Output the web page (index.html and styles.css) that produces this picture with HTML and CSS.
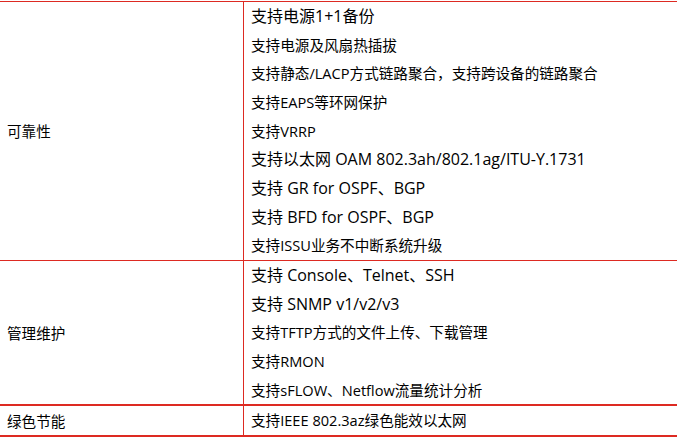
FILE: index.html
```html
<!DOCTYPE html>
<html lang="zh-CN">
<head>
  <meta charset="UTF-8">
  <meta name="viewport" content="width=device-width, initial-scale=1.0">
  <title>功能特性</title>
  <link rel="stylesheet" href="styles.css">
</head>
<body>
  <table class="spec">
    <tr class="row-thin">
      <td class="name">可靠性</td>
      <td class="items">
        <p class="big">支持电源1+1备份</p>
        <p>支持电源及风扇热插拔</p>
        <p>支持静态/LACP方式链路聚合，支持跨设备的链路聚合</p>
        <p>支持EAPS等环网保护</p>
        <p>支持VRRP</p>
        <p class="big">支持以太网 OAM 802.3ah/802.1ag/ITU-Y.1731</p>
        <p class="big">支持 GR for OSPF、BGP</p>
        <p class="big">支持 BFD for OSPF、BGP</p>
        <p>支持ISSU业务不中断系统升级</p>
      </td>
    </tr>
    <tr class="row-thin">
      <td class="name">管理维护</td>
      <td class="items">
        <p class="big">支持 Console、Telnet、SSH</p>
        <p class="big">支持 SNMP v1/v2/v3</p>
        <p>支持TFTP方式的文件上传、下载管理</p>
        <p>支持RMON</p>
        <p>支持sFLOW、Netflow流量统计分析</p>
      </td>
    </tr>
    <tr class="row-thick">
      <td class="name">绿色节能</td>
      <td class="items">
        <p>支持IEEE 802.3az绿色能效以太网</p>
      </td>
    </tr>
  </table>
</body>
</html>
```

FILE: styles.css
```css
body {
  margin: 0;
  padding-top: 1px;
  background: #fff;
  color: #000;
  font-family: "Open Sans", "Noto Sans CJK SC", sans-serif;
}
.spec {
  width: 677px;
  border-collapse: collapse;
}
.spec td {
  padding: 0 7px;
  border-top: 1px solid #dd2a22;
}
.spec .name {
  width: 229px;
  font-size: 14.6px;
  border-right: 1px solid #dd2a22;
  vertical-align: middle;
}
.spec .items {
  font-size: 14.6px;
}
.row-thick td {
  border-top: 2px solid #dd2a22;
  border-bottom: 2px solid #dd2a22;
}
.items p {
  margin: 0;
  line-height: 28.65px;
  white-space: nowrap;
}
.items .big {
  font-size: 16px;
}
```
